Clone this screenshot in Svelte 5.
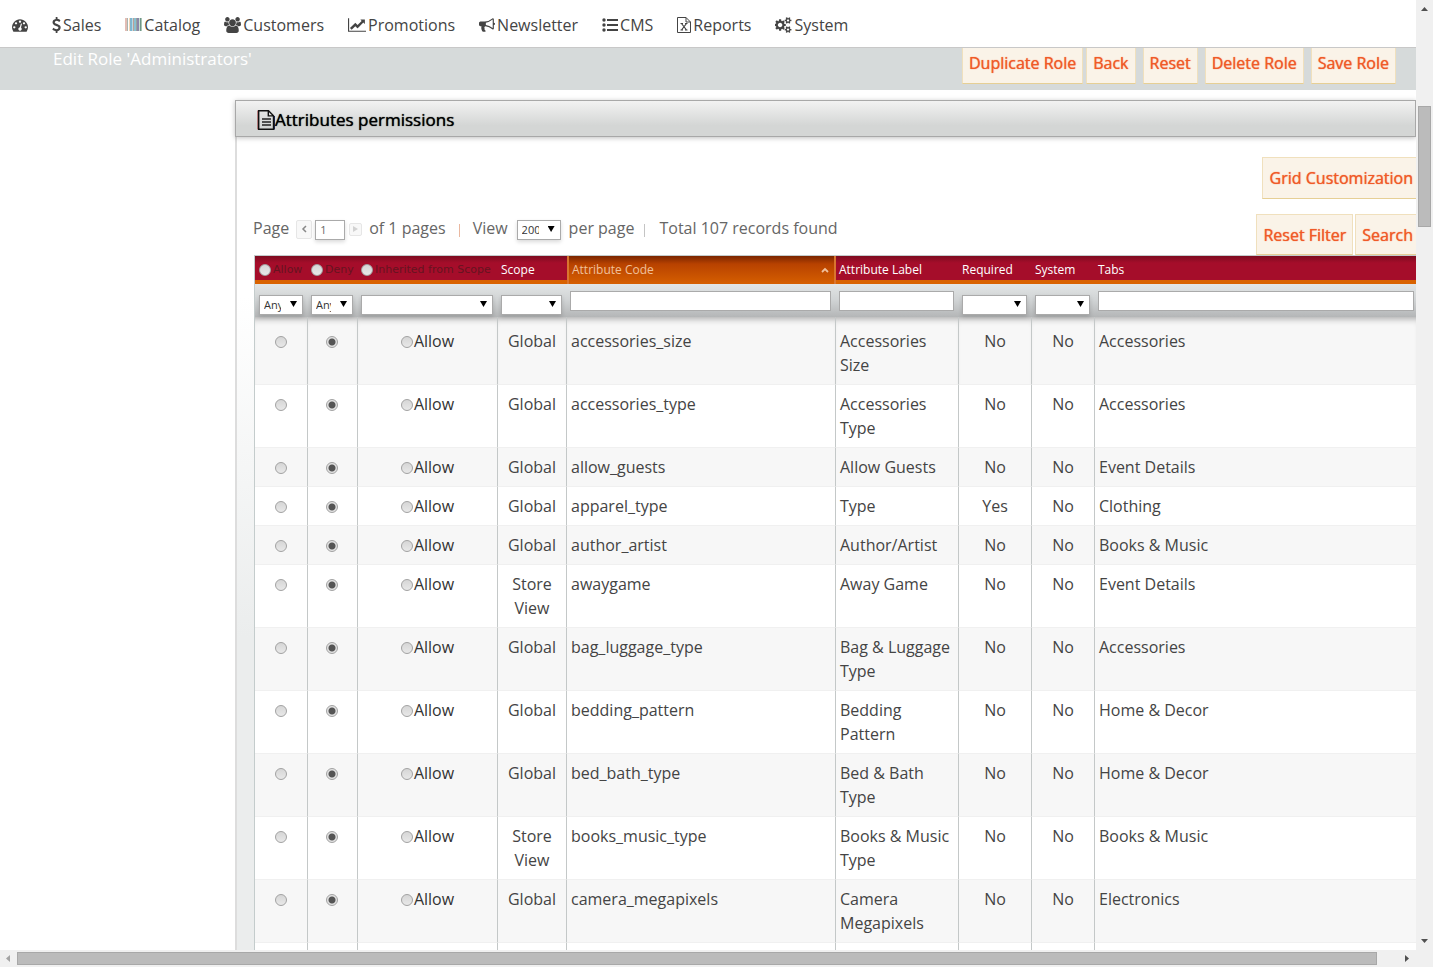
<script>
  const nav = [
    { name: 'dashboard', label: '', w: 16 },
    { name: 'dollar', label: 'Sales', w: 9 },
    { name: 'barcode', label: 'Catalog', w: 17 },
    { name: 'users', label: 'Customers', w: 17 },
    { name: 'chart', label: 'Promotions', w: 18 },
    { name: 'horn', label: 'Newsletter', w: 16 },
    { name: 'list', label: 'CMS', w: 16 },
    { name: 'excel', label: 'Reports', w: 14 },
    { name: 'cogs', label: 'System', w: 17 }
  ];

  const rows = [
    ['Global', 'accessories_size', 'Accessories Size', 'No', 'No', 'Accessories'],
    ['Global', 'accessories_type', 'Accessories Type', 'No', 'No', 'Accessories'],
    ['Global', 'allow_guests', 'Allow Guests', 'No', 'No', 'Event Details'],
    ['Global', 'apparel_type', 'Type', 'Yes', 'No', 'Clothing'],
    ['Global', 'author_artist', 'Author/Artist', 'No', 'No', 'Books & Music'],
    ['Store View', 'awaygame', 'Away Game', 'No', 'No', 'Event Details'],
    ['Global', 'bag_luggage_type', 'Bag & Luggage Type', 'No', 'No', 'Accessories'],
    ['Global', 'bedding_pattern', 'Bedding Pattern', 'No', 'No', 'Home & Decor'],
    ['Global', 'bed_bath_type', 'Bed & Bath Type', 'No', 'No', 'Home & Decor'],
    ['Store View', 'books_music_type', 'Books & Music Type', 'No', 'No', 'Books & Music'],
    ['Global', 'camera_megapixels', 'Camera Megapixels', 'No', 'No', 'Electronics']
  ];
</script>

{#snippet icon(name, w)}
  {#if name === 'dashboard'}
    <svg width={w} height="16" viewBox="0 0 1792 1792" aria-hidden="true"><path d="M384 1152q0-53-37.500-90.500t-90.500-37.500-90.500 37.500-37.500 90.500 37.500 90.500 90.500 37.500 90.500-37.500 37.500-90.500zm192-448q0-53-37.500-90.500t-90.500-37.500-90.500 37.500-37.500 90.500 37.500 90.500 90.500 37.500 90.500-37.500 37.500-90.500zm428 481l101-382q6-26-7.500-48.500t-38.500-29.500-48 6.500-30 39.500l-101 382q-60 5-107 43.500t-63 98.500q-20 77 20 146t117 89 146-20 89-117q16-60-6-117t-72-91zm660-33q0-53-37.500-90.500t-90.500-37.500-90.500 37.500-37.500 90.500 37.500 90.500 90.500 37.500 90.500-37.500 37.500-90.500zm-640-640q0-53-37.500-90.500t-90.500-37.500-90.500 37.500-37.500 90.500 37.500 90.500 90.500 37.500 90.500-37.500 37.500-90.500zm448 192q0-53-37.500-90.500t-90.500-37.500-90.500 37.500-37.500 90.500 37.500 90.500 90.500 37.500 90.500-37.500 37.500-90.500zm320 448q0 261-141 483-19 29-54 29h-1402q-35 0-54-29-141-221-141-483 0-182 71-348t191-286 286-191 348-71 348 71 286 191 191 286 71 348z" /></svg>
  {:else if name === 'dollar'}
    <svg width={w} height="16" viewBox="390 0 1010 1792" aria-hidden="true"><path d="M1362 1185q0 153-99.500 263.500t-258.500 136.500v175q0 14-9 23t-23 9h-135q-13 0-22.500-9.500t-9.500-22.500v-175q-66-9-127.500-31t-101.500-44.500-74-48-46.500-37.500-17.500-18q-17-21-2-41l103-135q7-10 23-12 15-2 24 9l2 2q113 99 243 125 37 8 74 8 81 0 142.500-43t61.500-122q0-28-15-53t-33.500-42-58.500-37.500-66-32-80-32.500q-39-16-61.500-25t-61.500-26.500-62.500-31-56.500-35.500-53.500-42.500-43.500-49-35.500-58-21-66.500-8.500-78q0-138 98-242t255-134v-180q0-13 9.500-22.500t22.500-9.500h135q14 0 23 9t9 23v176q57 6 110.500 23t87 33.500 63.500 37.500 39 29 15 14q17 18 5 38l-81 146q-8 15-23 16-14 3-27-7-3-3-14.500-12t-39-26.500-58.500-32-74.500-26-85.500-11.500q-95 0-155 43t-60 111q0 26 8.500 48t29.500 41.500 39.500 33 56 31 60.500 27 70 27.500q53 20 81 31.500t76 35 75.500 42.500 62 50 53 63.500 31.500 76.500 13 94z" /></svg>
  {:else if name === 'barcode'}
    <svg width={w} height="16" viewBox="0 0 17 16" aria-hidden="true">
      <path fill="#e3bdb5" d="M0 1h2v13H0z" /><path fill="#a9b7b0" d="M2 1h1v13H2z" /><path fill="#f4d6b6" d="M4 1h1v13H4z" /><path fill="#7fb6cf" d="M5 1h2v13H5z" /><path fill="#b9d9e4" d="M7 1h1v13H7z" /><path fill="#bd9f96" d="M8 1h1v13H8z" /><path fill="#8ac0d0" d="M9 1h2v13H9z" /><path fill="#98a49f" d="M11 1h1v13h-1z" /><path fill="#8b86a8" d="M12 1h2v13h-2z" /><path fill="#c8dfcf" d="M14 1h1v13h-1z" /><path fill="#6f9589" d="M15 1h1v13h-1z" /><path fill="#a9c6b5" d="M16 1h1v13h-1z" />
    </svg>
  {:else if name === 'users'}
    <svg width={w} height="16" viewBox="0 0 1920 1792" aria-hidden="true"><path d="M593 896q-162 5-265 128h-134q-82 0-138-40.500t-56-118.500q0-353 124-353 6 0 43.500 21t97.500 42.500 119 21.500q67 0 133-23-5 37-5 66 0 139 81 256zm1071 637q0 120-73 189.500t-194 69.500h-874q-121 0-194-69.500t-73-189.500q0-53 3.500-103.500t14-109 26.500-108.500 43-97.500 62-81 85.500-53.500 111.500-20q10 0 43 21.500t73 48 107 48 135 21.500 135-21.500 107-48 73-48 43-21.500q61 0 111.500 20t85.500 53.500 62 81 43 97.500 26.500 108.500 14 109 3.500 103.500zm-1024-1277q0 106-75 181t-181 75-181-75-75-181 75-181 181-75 181 75 75 181zm704 384q0 159-112.500 271.500t-271.500 112.500-271.500-112.500-112.500-271.500 112.500-271.500 271.500-112.500 271.500 112.500 112.500 271.500zm576 225q0 78-56 118.500t-138 40.500h-134q-103-123-265-128 81-117 81-256 0-29-5-66 66 23 133 23 59 0 119-21.500t97.500-42.500 43.500-21q124 0 124 353zm-128-609q0 106-75 181t-181 75-181-75-75-181 75-181 181-75 181 75 75 181z" /></svg>
  {:else if name === 'chart'}
    <svg width={w} height="16" viewBox="0 0 2048 1792" aria-hidden="true"><path d="M2048 1536v128h-2048v-1536h128v1408h1920zm-128-1248v435q0 21-19.500 29.500t-35.500-7.500l-121-121-633 633q-10 10-23 10t-23-10l-233-233-416 416-192-192 585-585q10-10 23-10t23 10l233 233 464-464-121-121q-16-16-7.500-35.500t29.500-19.500h435q14 0 23 9t9 23z" /></svg>
  {:else if name === 'horn'}
    <svg width={w} height="16" viewBox="0 0 1792 1792" aria-hidden="true"><path d="M1664 640q53 0 90.500 37.500t37.500 90.500-37.500 90.500-90.500 37.500v384q0 52-38 90t-90 38q-417-347-812-380-58 19-91 66t-31 100.500 40 92.500q-20 33-23 65.500t6 58 33.500 55 48 50 61.500 50.500q-29 58-111.500 83t-168.500 11.500-132-55.500q-7-23-29.500-87.500t-32-94.500-23-89-15-101 3.500-98.500 22-110.500h-122q-66 0-113-47t-47-113v-192q0-66 47-113t113-47h480q435 0 896-384 52 0 90 38t38 90v384zm-128 604v-954q-394 302-768 343v270q377 42 768 341z" /></svg>
  {:else if name === 'list'}
    <svg width={w} height="16" viewBox="0 0 16 16" aria-hidden="true"><circle cx="2" cy="3" r="1.700" /><circle cx="2" cy="8" r="1.700" /><circle cx="2" cy="13" r="1.700" /><path d="M5 2h11v2H5zM5 7h11v2H5zM5 12h11v2H5z" /></svg>
  {:else if name === 'excel'}
    <svg width={w} height="16" viewBox="0 0 14 16" aria-hidden="true"><path fill="none" stroke="#444" d="M.5.5h8.500l4.500 4.500v10.500H.5zM9 .5V5h4.500" /><path fill="none" stroke="#444" stroke-width="1.200" d="M4.500 6.500l5 6.500M9.500 6.500l-5 6.500M3.500 6.500h2.500M8 6.500h2.500M3.500 13H6M8 13h2.500" /></svg>
  {:else if name === 'cogs'}
    <svg width={w} height="16" viewBox="0 0 1920 1792" aria-hidden="true"><path d="M832 896q0-106-75-181t-181-75-181 75-75 181 75 181 181 75 181-75 75-181zm768 512q0-52-38-90t-90-38-90 38-38 90q0 53 37.500 90.500t90.500 37.500 90.500-37.500 37.500-90.500zm0-1024q0-52-38-90t-90-38-90 38-38 90q0 53 37.500 90.500t90.500 37.500 90.500-37.500 37.500-90.500zm-384 421v185q0 10-7 19.500t-16 10.500l-155 24q-11 35-32 76 34 48 90 115 7 11 7 20 0 12-7 19-23 30-82.500 89.500t-78.500 59.500q-11 0-21-7l-115-90q-37 19-77 31-11 108-23 155-7 24-30 24h-186q-11 0-20-7.500t-10-17.500l-23-153q-34-10-75-31l-118 89q-7 7-20 7-11 0-21-8-144-133-144-160 0-9 7-19 10-14 41-53t47-61q-23-44-35-82l-152-24q-10-1-17-9.500t-7-19.500v-185q0-10 7-19.500t16-10.500l155-24q11-35 32-76-34-48-90-115-7-11-7-20 0-12 7-20 22-30 82-89t79-59q11 0 21 7l115 90q34-18 77-32 11-108 23-154 7-24 30-24h186q11 0 20 7.500t10 17.500l23 153q34 10 75 31l118-89q8-7 20-7 11 0 21 8 144 133 144 160 0 8-7 19-12 16-42 54t-45 60q23 48 34 82l152 23q10 2 17 10.500t7 19.500zm640 533v140q0 16-149 31-12 27-30 52 51 113 51 138 0 4-4 7-122 71-124 71-8 0-46-47t-52-68q-20 2-30 2t-30-2q-14 21-52 68t-46 47q-2 0-124-71-4-3-4-7 0-25 51-138-18-25-30-52-149-15-149-31v-140q0-16 149-31 13-29 30-52-51-113-51-138 0-4 4-7 4-2 35-20t59-34 30-16q8 0 46 46.500t52 67.500q20-2 30-2t30 2q51-71 92-112l6-2q4 0 124 70 4 3 4 7 0 25-51 138 17 23 30 52 149 15 149 31zm0-1024v140q0 16-149 31-12 27-30 52 51 113 51 138 0 4-4 7-122 71-124 71-8 0-46-47t-52-68q-20 2-30 2t-30-2q-14 21-52 68t-46 47q-2 0-124-71-4-3-4-7 0-25 51-138-18-25-30-52-149-15-149-31v-140q0-16 149-31 13-29 30-52-51-113-51-138 0-4 4-7 4-2 35-20t59-34 30-16q8 0 46 46.500t52 67.500q20-2 30-2t30 2q51-71 92-112l6-2q4 0 124 70 4 3 4 7 0 25-51 138 17 23 30 52 149 15 149 31z" /></svg>
  {/if}
{/snippet}

{#snippet dropdown(label, value)}
  <span class="select">
    <select aria-label={label}><option>{value}</option></select>
  </span>
{/snippet}

<div class="window">
  <div class="page">
    <nav>
      {#each nav as item}
        <a href="#{item.name}" aria-label={item.label || 'Dashboard'}>{@render icon(item.name, item.w)}{#if item.label}<span>{item.label}</span>{/if}</a>
      {/each}
    </nav>

    <header>
      <h1>Edit Role 'Administrators'</h1>
      <div class="actions">
        <button class="tight">Duplicate Role</button>
        <button>Back</button>
        <button>Reset</button>
        <button>Delete Role</button>
        <button>Save Role</button>
      </div>
    </header>

    <main>
      <h2>
        <svg width="18" height="20" viewBox="0 0 18 20" aria-hidden="true">
          <path fill="none" stroke="#8c1d1d" stroke-width="1" d="M1 .5v19" />
          <path fill="none" stroke="#1c2a58" stroke-width="1" d="M17.500 6v13.500" />
          <path fill="none" stroke="#111" stroke-width="1.400" d="M1.700.7h9.800l5 5v13.600H1.700zM11.300.7v5.200h5.200" />
          <path stroke="#222" stroke-width="1.500" d="M5 9h9M5 12h9M5 15h9" />
        </svg>
        <span>Attributes permissions</span>
      </h2>

      <div class="panel">
        <div class="customize"><button class="cut">Grid Customization</button></div>
        <div class="toolbar">
          <div class="pager">
            <label for="page">Page</label>
            <button class="step prev" aria-label="Previous page"><svg width="6" height="8" viewBox="0 0 6 8"><path fill="none" stroke="#888" stroke-width="1.500" d="M5 1L2 4l3 3" /></svg></button>
            <input id="page" value="1" />
            <button class="step next" aria-label="Next page"><svg width="5" height="6" viewBox="0 0 5 6"><path fill="#d2d2d2" d="M0 0l5 3-5 3z" /></svg></button>
            <span class="count">of 1 pages</span>
            <i class="warm"></i>
            <span class="view">View</span>
            {@render dropdown('Records per page', '200')}
            <span class="per">per page</span>
            <i></i>
            <span class="total">Total 107 records found</span>
          </div>
          <div class="search">
            <button>Reset Filter</button>
            <button class="cut">Search</button>
          </div>
        </div>

        <table>
          <colgroup>
            <col class="c1" /><col class="c2" /><col class="c3" /><col class="c4" /><col class="c5" />
            <col class="c6" /><col class="c7" /><col class="c8" /><col />
          </colgroup>
          <thead>
            <tr class="heads">
              <th><label><input type="radio" name="all" />Allow</label></th>
              <th><label><input type="radio" name="all" />Deny</label></th>
              <th><label><input type="radio" name="all" />Inherited from Scope</label></th>
              <th>Scope</th>
              <th class="sorted">
                <a href="#sort">Attribute Code<svg width="8" height="6" viewBox="0 0 8 6" aria-hidden="true"><path fill="none" stroke="#f0c09c" stroke-width="1.800" d="M1 5l3-3 3 3" /></svg></a>
              </th>
              <th>Attribute Label</th>
              <th>Required</th>
              <th>System</th>
              <th>Tabs</th>
            </tr>
            <tr class="filters">
              <td>{@render dropdown('Allow filter', 'Any')}</td>
              <td>{@render dropdown('Deny filter', 'Any')}</td>
              <td>{@render dropdown('Inherited filter', '')}</td>
              <td>{@render dropdown('Scope filter', '')}</td>
              <td><input aria-label="Attribute code filter" /></td>
              <td><input aria-label="Attribute label filter" /></td>
              <td>{@render dropdown('Required filter', '')}</td>
              <td>{@render dropdown('System filter', '')}</td>
              <td class="edge"><input aria-label="Tabs filter" /></td>
            </tr>
          </thead>
          <tbody>
            {#each rows as [scope, code, label, required, system, tabs]}
              <tr>
                <td class="mid"><input type="radio" name={code} aria-label="Allow {code}" /></td>
                <td class="mid deny"><input type="radio" name={code} checked aria-label="Deny {code}" /></td>
                <td class="mid"><label><input type="radio" name={code} />Allow</label></td>
                <td class="mid">{scope}</td>
                <td>{code}</td>
                <td>{label}</td>
                <td class="mid">{required}</td>
                <td class="mid">{system}</td>
                <td>{tabs}</td>
              </tr>
            {/each}
            <tr class="rest">
              {#each Array(9) as _}<td></td>{/each}
            </tr>
          </tbody>
        </table>
      </div>
    </main>
  </div>

  <div class="bar vertical" aria-hidden="true">
    <svg width="7" height="4" viewBox="0 0 7 4"><path d="M0 4l3.500-4L7 4z" /></svg>
    <div class="track"><div class="thumb"></div></div>
    <svg width="7" height="4" viewBox="0 0 7 4"><path d="M0 0h7L3.500 4z" /></svg>
  </div>
  <div class="bar horizontal" aria-hidden="true">
    <svg class="off" width="4" height="7" viewBox="0 0 4 7"><path d="M4 0v7L0 3.500z" /></svg>
    <div class="track"><div class="thumb"></div></div>
    <svg width="4" height="7" viewBox="0 0 4 7"><path d="M0 0v7l4-3.500z" /></svg>
  </div>
</div>

<style>
  * { box-sizing: border-box; }
  .window {
    display: grid;
    grid-template: minmax(0, 1fr) 17px / minmax(0, 1fr) 17px;
    height: 100vh;
    background: #f0f0f0;
    color: #444;
    font: 16px/24px "Open Sans", sans-serif;
  }
  .page { overflow: hidden; background: #fff; }
  button, input, select { font: inherit; color: inherit; margin: 0; border-radius: 0; }
  a { color: inherit; text-decoration: none; }

  nav {
    display: flex;
    align-items: center;
    gap: 24px;
    height: 48px;
    padding: 2px 12px 0;
    border-bottom: 1px solid #c8c8c8;
  }
  nav a { display: flex; align-items: center; gap: 2px; }
  nav svg { fill: #444; }

  header {
    display: flex;
    justify-content: space-between;
    align-items: flex-start;
    height: 42px;
    padding: 0 20px 0 53px;
    background: #d6dada;
  }
  h1 { margin: 0; font-size: 17px; font-weight: 500; line-height: 22px; color: #fff; }
  button {
    height: 42px;
    padding: 0 6px;
    border: 1px solid #f0e0bd;
    border-bottom-color: #e6cf95;
    background: #faf3e8;
    color: #f05a28;
    text-shadow: 0 0 1px #f05a28;
    white-space: nowrap;
  }
  .actions { display: flex; gap: 7px; }
  .actions button { height: 36px; padding-bottom: 6px; border-top: 0; }
  .actions .tight { margin-right: -4px; }

  main { padding: 10px 0 0 235px; }
  h2 {
    position: relative;
    display: flex;
    align-items: center;
    height: 37px;
    margin: 0;
    padding: 2px 21px 0;
    border: 1px solid #a8a8a8;
    background: linear-gradient(#f2f2f2, #d4d6d5 70%);
    box-shadow: 0 1px 5px rgba(0, 0, 0, 0.25);
    font-size: 17px;
    font-weight: 400;
    color: #000;
    text-shadow: 0 0 1px #000;
  }
  .panel {
    padding: 20px 0 0 17px;
    border-left: 2px solid #ddd;
    background: linear-gradient(#fff 160px, #ebeded 500px);
    background-size: 17px 100%;
    background-repeat: no-repeat;
  }
  .customize, .search { display: flex; justify-content: flex-end; gap: 2px; }
  .customize button { padding-left: 7px; }
  .toolbar { display: flex; justify-content: space-between; align-items: flex-start; margin-top: 15px; }
  .search button { height: 41px; }
  button.cut { padding-right: 3px; border-right: 0; }

  .pager { display: flex; align-items: center; height: 28px; margin-left: -1px; color: #666; }
  .pager input {
    width: 30px;
    height: 20px;
    margin: 4px 4px 0 3px;
    padding: 0 4px;
    border: 1px solid #aaa;
    box-shadow: 0 2px 4px rgba(0, 0, 0, 0.15);
    font-size: 11px;
  }
  .step {
    display: grid;
    place-items: center;
    width: 16px;
    height: 19px;
    margin-top: 2px;
    padding: 0;
    border: 1px solid #e6e6e6;
    border-radius: 2px;
    background: #f8f8f8;
  }
  .prev { margin-left: 7px; }
  .next { width: 13px; height: 13px; }
  .count { margin-left: 7px; }
  i { width: 1px; height: 13px; margin: 4px 13px 0; background: #c4c4c4; }
  .warm { background: #eab8a0; }
  .view { margin-right: 9px; }
  .pager .select { width: 44px; margin-top: 4px; }
  .per { margin-left: 8px; }
  .per + i { margin: 4px 14px 0 10px; }

  .select { position: relative; display: block; }
  .select::after {
    content: "";
    position: absolute;
    top: 6px;
    right: 6px;
    width: 7px;
    height: 6px;
    background: #000;
    clip-path: polygon(0 0, 100% 0, 50% 100%);
    pointer-events: none;
  }
  select {
    appearance: none;
    display: block;
    width: 100%;
    height: 20px;
    padding: 0 21px 0 4px;
    border: 1px solid #aaa;
    background: #fff;
    box-shadow: 0 2px 4px rgba(0, 0, 0, 0.15);
    font-size: 11px;
    line-height: 18px;
    text-overflow: clip;
    color: #333;
  }

  table { width: 100%; border-collapse: separate; border-spacing: 0; table-layout: fixed; border-left: 1px solid #c4cccc; border-top: 1px solid #c4cccc; }
  .c1 { width: 53px; }
  .c2 { width: 50px; }
  .c3 { width: 140px; }
  .c4 { width: 69px; }
  .c5 { width: 269px; }
  .c6 { width: 123px; }
  .c7 { width: 73px; }
  .c8 { width: 63px; }

  th {
    height: 28px;
    padding: 0 0 0 3px;
    border-bottom: 4px solid #d96200;
    background: linear-gradient(#7d0c20, #a50d2a 7px);
    font-size: 12px;
    font-weight: 500;
    line-height: 20px;
    text-align: left;
    white-space: nowrap;
    color: #fff;
  }
  th:first-child { padding-left: 4px; }
  th label {
    display: flex;
    align-items: center;
    gap: 2px;
    margin-top: 4px;
    font: 11px/20px "DejaVu Sans", sans-serif;
    color: #651420;
  }
  th:not(:has(label)) { padding-top: 4px; }
  .sorted {
    padding: 0 5px 0 3px;
    border-bottom: 0;
    border-left: 2px solid #d9752f;
    border-right: 2px solid #d9752f;
    background: linear-gradient(#7a2600, #b84200 8px, #d65f00);
    color: #f0c09c;
    font-weight: 400;
  }
  .sorted a { display: flex; justify-content: space-between; align-items: center; }

  .filters td {
    height: 33px;
    padding: 7px 5px 0 3px;
    background: linear-gradient(#e2e5e5, #d0d3d4 50%, #b4b6b7);
    vertical-align: top;
  }
  .filters .edge { padding-right: 2px; }
  .filters td:first-child { padding-left: 4px; }
  .filters td:has(select) { padding-top: 11px; }
  .filters input {
    display: block;
    width: 100%;
    height: 20px;
    border: 1px solid #aaa;
    background: #fff;
  }

  tbody td {
    padding: 7px 4px;
    border-right: 1px solid #c4c8c8;
    border-bottom: 1px solid #f0f0f0;
    vertical-align: top;
  }
  tbody td:last-child { border-right: 0; }
  tbody tr:nth-child(odd) td { background: #f7f7f7; }
  tbody tr:nth-child(even) td { background: #fff; }
  tbody tr:first-child td {
    padding-top: 12px;
    box-shadow: inset 0 7px 6px -5px #aaa;
  }
  .mid { text-align: center; }
  .deny { padding-right: 6px; }
  td label { color: #333; }
  .rest td { height: 63px; }

  input[type="radio"] {
    appearance: none;
    flex: none;
    width: 12px;
    height: 12px;
    border: 1px solid #a2a2a2;
    border-radius: 50%;
    background: linear-gradient(#d6d6d6, #e8e8e8);
    vertical-align: -1px;
  }
  td label input { margin-right: 1px; }
  input[type="radio"]:checked { background: radial-gradient(circle, #555 3px, #e2e2e2 4px); }

  .bar { display: flex; align-items: center; }
  .bar svg { flex: none; fill: #505050; }
  .bar .off { fill: #a3a3a3; }
  .track { flex: 1; }
  .thumb { background: #bbb; border: 1px solid #a8a8a8; }
  .vertical { flex-direction: column; padding: 7px 0; }
  .vertical .thumb { width: 13px; height: 13%; margin-top: 95px; }
  .horizontal { padding: 0 7px 0 6px; }
  .horizontal .track { margin: 0 7px; }
  .horizontal .thumb { height: 13px; width: 98.5%; }
</style>
